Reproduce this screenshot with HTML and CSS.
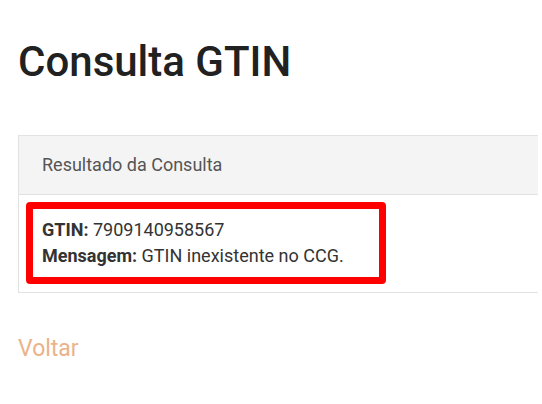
FILE: index.html
```html
<!DOCTYPE html>
<html lang="pt-BR">
<head>
<meta charset="utf-8">
<title>Consulta GTIN</title>
<link rel="stylesheet" href="styles.css">
</head>
<body>
<main class="page">
  <h1 class="title">Consulta GTIN</h1>
  <section class="panel">
    <div class="panel-heading">Resultado da Consulta</div>
    <div class="panel-body">
      <div class="highlight">
        <div class="line"><strong>GTIN:</strong> 7909140958567</div>
        <div class="line"><strong>Mensagem:</strong> GTIN inexistente no CCG.</div>
      </div>
    </div>
  </section>
  <a class="back" href="#">Voltar</a>
</main>
</body>
</html>
```
FILE: styles.css
```css
html, body {
  margin: 0;
  padding: 0;
  background: #ffffff;
}
body {
  font-family: Roboto, "Liberation Sans", sans-serif;
  color: #333333;
}
.page {
  display: flex;
  flex-direction: column;
  align-items: flex-start;
  padding: 37px 4px 0 18px;
}
.title {
  margin: 0;
  font-size: 42px;
  line-height: 1.2;
  font-weight: 500;
  color: #212121;
}
.panel {
  align-self: stretch;
  margin-top: 48px;
  border: 1px solid #e2e2e2;
  border-right: none;
  background: #ffffff;
}
.panel-heading {
  background: #f4f4f4;
  border-bottom: 1px solid #e2e2e2;
  padding: 18px 23px 18px;
  font-size: 18px;
  line-height: 22px;
  color: #555555;
}
.panel-body {
  padding: 7px 7px 8px;
  display: flex;
}
.highlight {
  width: 328px;
  border: 7px solid #ff0000;
  border-radius: 4px;
  padding: 8px 9px 8px;
  font-size: 18px;
  line-height: 26px;
  color: #333333;
}
.highlight strong {
  font-weight: 700;
}
.back {
  margin-top: 42px;
  font-size: 23px;
  line-height: 28px;
  color: #ebb38a;
  text-decoration: none;
}
```
